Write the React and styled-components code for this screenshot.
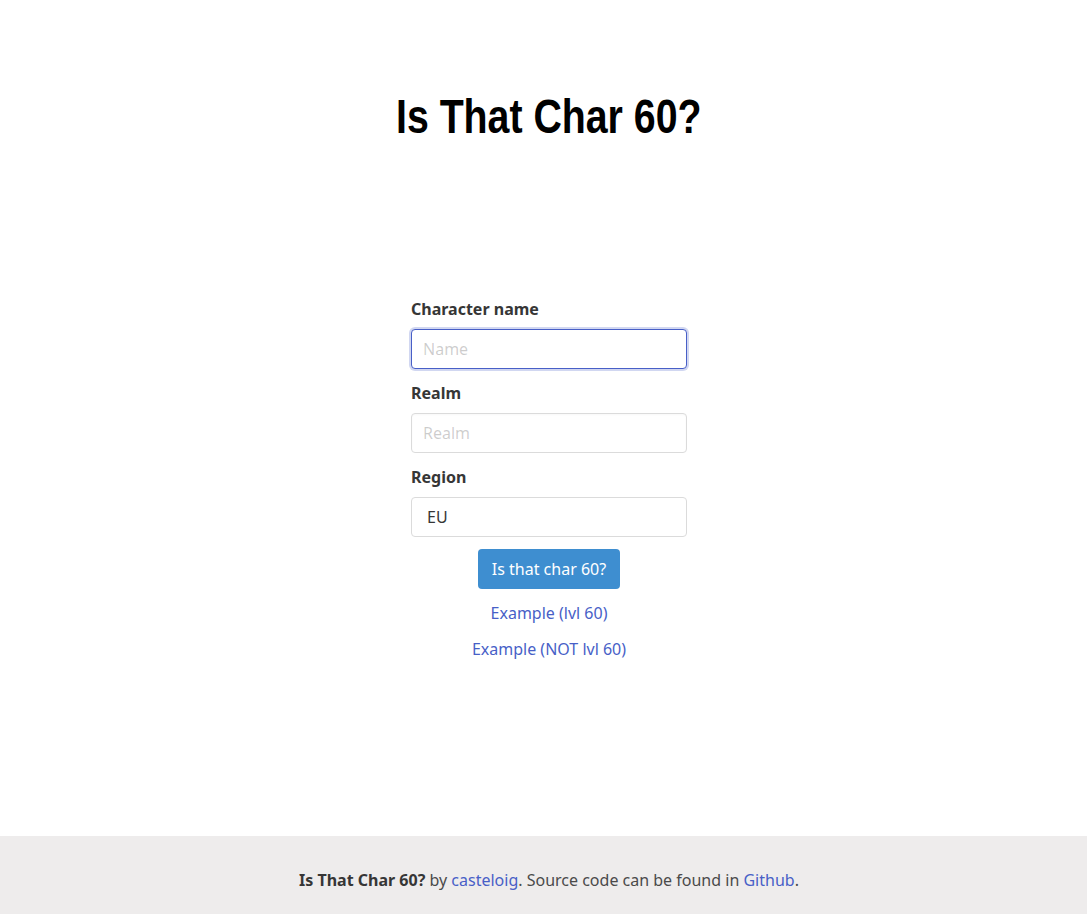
import React from 'react';
import styled, { createGlobalStyle } from 'styled-components';

const GlobalStyle = createGlobalStyle`
  html, body {
    margin: 0;
    padding: 0;
    background: #ffffff;
    font-family: "Noto Sans", "Open Sans", sans-serif;
    font-size: 16px;
    color: #4a4a4a;
  }
  * {
    box-sizing: border-box;
  }
`;

const Page = styled.div`
  min-height: 100vh;
  display: flex;
  flex-direction: column;
`;

const Header = styled.header`
  padding-top: 90px;
  padding-left: 11px;
  text-align: center;
`;

// no narrow face installed, so squeeze the bold sans to a condensed width
const Title = styled.h1`
  display: inline-block;
  margin: 0;
  font-family: "Liberation Sans", Arial, sans-serif;
  font-weight: 700;
  font-size: 48px;
  line-height: 54px;
  color: #000000;
  transform: scaleX(0.818);
`;

const Main = styled.main`
  flex: 1;
  display: flex;
  justify-content: center;
  padding-top: 153px;
  padding-left: 11px;
`;

const Form = styled.form`
  width: 276px;
  display: flex;
  flex-direction: column;
  gap: 12px;
`;

const Field = styled.div`
  display: flex;
  flex-direction: column;
  gap: 8px;
`;

const Label = styled.label`
  font-weight: 700;
  font-size: 16px;
  line-height: 24px;
  color: #363636;
`;

const Input = styled.input`
  height: 40px;
  width: 100%;
  padding: 0 11px;
  font-family: inherit;
  font-size: 16px;
  color: #363636;
  background: #ffffff;
  border: 1px solid ${({ $focused }) => ($focused ? '#485fc7' : '#dbdbdb')};
  border-radius: 4px;
  box-shadow: ${({ $focused }) =>
    $focused ? '0 0 0 2px rgba(72, 95, 199, 0.25)' : 'inset 0 1px 2px rgba(10, 10, 10, 0.03)'};
  outline: none;

  &::placeholder {
    color: rgba(54, 54, 54, 0.25);
  }
`;

const Select = styled.select`
  height: 40px;
  width: 100%;
  padding: 0 15px;
  font-family: inherit;
  font-size: 16px;
  color: #363636;
  background: #ffffff;
  border: 1px solid #dbdbdb;
  border-radius: 4px;
  appearance: none;
  outline: none;
`;

const Actions = styled.div`
  display: flex;
  flex-direction: column;
  align-items: center;
  gap: 12px;
`;

const Button = styled.button`
  height: 40px;
  padding: 0 14px;
  font-family: inherit;
  font-size: 16px;
  color: #ffffff;
  background: #3e8ed0;
  border: none;
  border-radius: 4px;
  cursor: pointer;
`;

const Link = styled.a`
  color: #485fc7;
  text-decoration: none;
  font-size: 16px;
  line-height: 24px;
  cursor: pointer;
`;

const Footer = styled.footer`
  background: #eeecec;
  height: 78px;
  display: flex;
  align-items: center;
  justify-content: center;
  padding-top: 10px;
  padding-left: 11px;
  font-size: 16px;
  color: #4a4a4a;

  strong {
    color: #363636;
  }
`;

export default function App() {
  return (
    <Page>
      <GlobalStyle />
      <Header>
        <Title>Is That Char 60?</Title>
      </Header>
      <Main>
        <Form onSubmit={(e) => e.preventDefault()}>
          <Field>
            <Label htmlFor="name">Character name</Label>
            <Input id="name" placeholder="Name" $focused autoFocus />
          </Field>
          <Field>
            <Label htmlFor="realm">Realm</Label>
            <Input id="realm" placeholder="Realm" />
          </Field>
          <Field>
            <Label htmlFor="region">Region</Label>
            <Select id="region" defaultValue="EU">
              <option value="EU">EU</option>
              <option value="US">US</option>
            </Select>
          </Field>
          <Actions>
            <Button type="submit">Is that char 60?</Button>
            <Link>Example (lvl 60)</Link>
            <Link>Example (NOT lvl 60)</Link>
          </Actions>
        </Form>
      </Main>
      <Footer>
        <span>
          <strong>Is That Char 60?</strong> by <Link>casteloig</Link>. Source code can be found in{' '}
          <Link>Github</Link>.
        </span>
      </Footer>
    </Page>
  );
}
